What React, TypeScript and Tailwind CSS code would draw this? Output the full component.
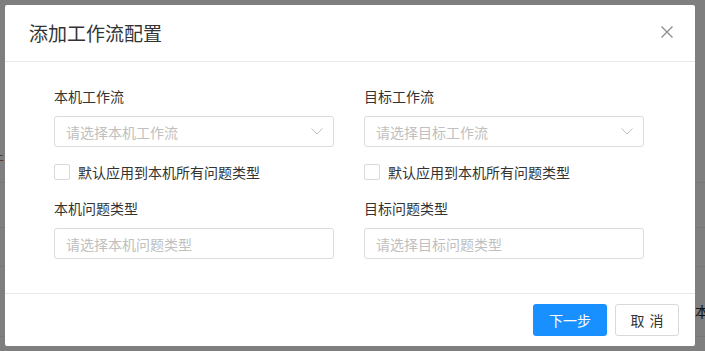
import React from "react";

const font = { fontFamily: '"Noto Sans CJK SC", "Noto Sans", sans-serif' };

function Chevron() {
  return (
    <svg width="12" height="7" viewBox="0 0 12 7" fill="none" className="shrink-0">
      <path d="M0.5 0.5 L6 6 L11.5 0.5" stroke="#c0c0c0" strokeWidth="1" />
    </svg>
  );
}

function SelectBox({ placeholder, arrow }: { placeholder: string; arrow?: boolean }) {
  return (
    <div className="flex h-[31px] w-full items-center justify-between rounded-[3px] border border-[#dcdcdc] bg-white pl-[11px] pr-[10px]">
      <span className="text-[14px] leading-none text-[#c0c0c0]">{placeholder}</span>
      {arrow && <Chevron />}
    </div>
  );
}

function Check({ label }: { label: string }) {
  return (
    <div className="flex items-center gap-[8px]">
      <span className="h-[16px] w-[16px] rounded-[2px] border border-[#d9d9d9] bg-white" />
      <span className="text-[14px] leading-none text-[#333]">{label}</span>
    </div>
  );
}

function Column({ a, b, c, d, e }: { a: string; b: string; c: string; d: string; e: string }) {
  return (
    <div className="flex w-[280px] flex-col">
      <div className="text-[14px] leading-none text-[#333]">{a}</div>
      <div className="mt-[13px]">
        <SelectBox placeholder={b} arrow />
      </div>
      <div className="mt-[17px]">
        <Check label={c} />
      </div>
      <div className="mt-[21px] text-[14px] leading-none text-[#333]">{d}</div>
      <div className="mt-[13px]">
        <SelectBox placeholder={e} />
      </div>
    </div>
  );
}

export default function App() {
  return (
    <div className="relative h-[351px] w-[705px] overflow-hidden bg-[#7f7f7f]" style={font}>
      {/* faint page behind */}
      <div className="flex h-full flex-col">
        <div className="h-[183px] border-b border-[#777]" />
        <div className="h-[45px] border-b border-[#777]" />
        <div className="h-[39px] border-b border-[#777]" />
        <div className="h-[70px] border-b border-[#777]" />
      </div>
      <span className="absolute left-[-10px] top-[148px] text-[14px] text-[#5a3a2a]">件</span>
      <span className="absolute left-[695px] top-[301px] text-[14px] text-[#111]">本</span>

      {/* modal */}
      <div className="absolute left-[5px] top-[5px] flex h-[341px] w-[690px] flex-col rounded-[2px] bg-white">
        <div className="flex h-[57px] items-center justify-between border-b border-[#e8e8e8] pl-[24px] pr-[22px]">
          <span className="-mt-[2px] text-[19px] leading-none text-[#333]">添加工作流配置</span>
          <svg width="12" height="12" viewBox="0 0 12 12" fill="none" className="-mt-[2px]">
            <path d="M0.5 0.5 L11.5 11.5 M11.5 0.5 L0.5 11.5" stroke="#8c8c8c" strokeWidth="1.3" />
          </svg>
        </div>
        <div className="flex flex-1 gap-[30px] border-b border-[#e8e8e8] pl-[49px] pt-[27px]">
          <Column
            a="本机工作流"
            b="请选择本机工作流"
            c="默认应用到本机所有问题类型"
            d="本机问题类型"
            e="请选择本机问题类型"
          />
          <Column
            a="目标工作流"
            b="请选择目标工作流"
            c="默认应用到本机所有问题类型"
            d="目标问题类型"
            e="请选择目标问题类型"
          />
        </div>
        <div className="flex h-[52px] items-center justify-end gap-[8px] pr-[16px]">
          <button className="h-[32px] w-[74px] rounded-[3px] bg-[#1890ff] text-[14px] text-white">下一步</button>
          <button className="flex h-[32px] w-[64px] items-center justify-center gap-[5px] rounded-[3px] border border-[#d9d9d9] bg-white text-[14px] text-[#333]">
            <span>取</span>
            <span>消</span>
          </button>
        </div>
      </div>
    </div>
  );
}
